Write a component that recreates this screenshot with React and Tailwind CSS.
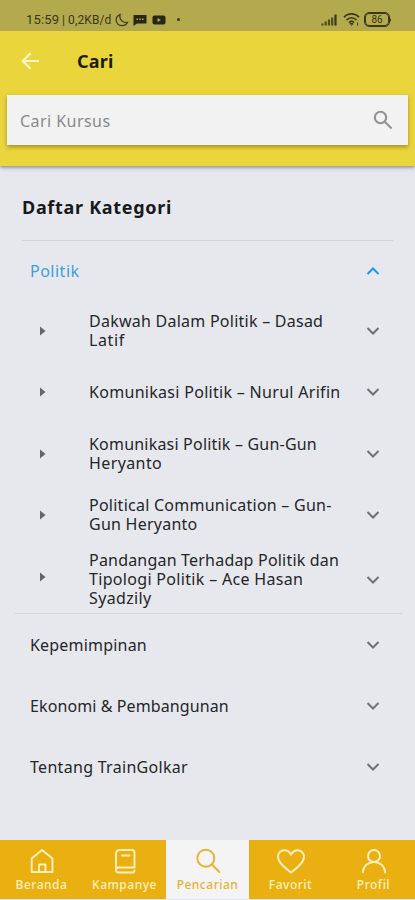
import React, { useState } from 'react';
import clsx from 'clsx';

const lessons = [
    { lines: [['Dakwah Dalam Politik – Dasad', 'tracking-[0.250px]'], ['Latif', 'tracking-[0.600px]']] },
    { lines: [['Komunikasi Politik – Nurul Arifin', 'tracking-[0.300px]']] },
    { lines: [['Komunikasi Politik – Gun-Gun', 'tracking-[0.200px]'], ['Heryanto', 'tracking-[0.400px]']] },
    { lines: [['Political Communication – Gun-', 'tracking-[0.250px]'], ['Gun Heryanto', 'tracking-[0.250px]']] },
    {
        tall: true,
        lines: [
            ['Pandangan Terhadap Politik dan', 'tracking-[0.200px]'],
            ['Tipologi Politik – Ace Hasan', 'tracking-[0.320px]'],
            ['Syadzily', 'tracking-[0.350px]'],
        ],
    },
];

const categories = [
    { name: 'Kepemimpinan', spacing: 'tracking-[0.200px]' },
    { name: 'Ekonomi & Pembangunan', spacing: 'tracking-[0.100px]' },
    { name: 'Tentang TrainGolkar', spacing: 'tracking-[0.300px]' },
];

const tabs = [
    { id: 'home', label: 'Beranda', icon: HomeIcon },
    { id: 'campaign', label: 'Kampanye', icon: BookIcon },
    { id: 'search', label: 'Pencarian', icon: FindIcon },
    { id: 'favorite', label: 'Favorit', icon: HeartIcon },
    { id: 'profile', label: 'Profil', icon: UserIcon },
];

function NavSvg({ children }) {
    return (
        <svg viewBox="0 0 28 26" className="h-[26px] w-7" fill="none" stroke="currentColor" strokeWidth="1.9" strokeLinejoin="round" strokeLinecap="round">
            {children}
        </svg>
    );
}

function HomeIcon() {
    return (
        <NavSvg>
            <path d="M3.700 10.500 14 2l10.500 8.500v13.500H3.700Z" />
            <path d="M11 23.500v-7h6.500v7" />
        </NavSvg>
    );
}

function BookIcon() {
    return (
        <NavSvg>
            <path d="M23.500 19.500H7.500a2.500 2.500 0 0 0-2.500 2.500V5.500A3.500 3.500 0 0 1 8.500 2h12.500a2.500 2.500 0 0 1 2.500 2.500ZM5 22a2.500 2.500 0 0 0 2.500 2.500H21.500q2 0 2-2M11 7.500h7.500" />
        </NavSvg>
    );
}

function FindIcon() {
    return (
        <NavSvg>
            <circle cx="11.800" cy="10.200" r="8.500" />
            <path d="m18 16.500 7.300 7.500" />
        </NavSvg>
    );
}

function HeartIcon() {
    return (
        <NavSvg>
            <path d="M14 24.500C9 20.500 1 15 1 8.800 1 5 3.800 2.300 7.300 2.300c2.900 0 5.300 1.600 6.700 4.400 1.400-2.800 3.800-4.400 6.700-4.400C24.200 2.300 27 5 27 8.800 27 15 19 20.500 14 24.500Z" />
        </NavSvg>
    );
}

function UserIcon() {
    return (
        <NavSvg>
            <circle cx="14" cy="8" r="6" />
            <path d="M2.800 24.300c.5-6.200 4.900-10.200 11.200-10.200s10.700 4 11.200 10.200" />
        </NavSvg>
    );
}

function Chevron({ up = false }) {
    return (
        <svg viewBox="0 0 14 10" className={clsx('h-[10px] w-[14px] shrink-0', up ? 'rotate-180 text-[#2196e8]' : 'text-[#6f7175]')} fill="none" stroke="currentColor" strokeWidth="2">
            <path d="m1.500 2 5.500 5.500L12.500 2" />
        </svg>
    );
}

function StatusBar() {
    return (
        <div className="flex h-[31px] items-center bg-[#b3aa4d] pt-2 pl-[26px] pr-[24px] text-[#3b3718]">
            <span className="w-[36px] whitespace-nowrap font-[Roboto] text-[13px] leading-4 tracking-[0.200px]">15:59</span>
            <span className="w-[51px] whitespace-nowrap font-[Roboto] text-[12px] leading-4 tracking-[0.100px]">| 0,2KB/d</span>
            <svg viewBox="0 0 14 14" className="ml-[2px] h-[14px] w-[14px]" fill="none" stroke="currentColor" strokeWidth="1.200">
                <path d="M5 1.500C2.500 2.500 1.200 4.500 1.200 7c0 3.300 2.600 5.700 5.800 5.700 2.500 0 4.500-1.200 5.500-3.400C8 10.300 3.800 6.500 5 1.500Z" />
            </svg>
            <svg viewBox="0 0 14 12" className="ml-[4px] h-3 w-[14px]">
                <path d="M0.500 1h13v8.500H4L0.500 12Z" fill="#292713" />
                <path d="M3.500 5.200h1.500M6.300 5.200h1.500M9 5.200h1.500" stroke="#b3aa4d" strokeWidth="1.500" />
            </svg>
            <svg viewBox="0 0 14 10" className="ml-[5px] h-[10px] w-[14px]">
                <rect x=".5" y=".5" width="13" height="9" rx="2" fill="#292713" />
                <path d="m5.500 3 3.500 2-3.500 2Z" fill="#b3aa4d" />
            </svg>
            <i className="ml-[11px] size-[3px] rounded-full bg-[#3b3718]" />
            <svg viewBox="0 0 16 12" className="ml-auto h-3 w-4" stroke="currentColor" strokeWidth="2.200">
                <path d="M1.500 11.500v-2M4.700 11.500v-4M8 11.500V5.500M11.200 11.500v-8" opacity=".8" />
                <path d="M14.500 11.500V0.500" />
            </svg>
            <svg viewBox="0 0 17 13" className="ml-[6px] h-[13px] w-[17px]" fill="none" stroke="currentColor" strokeWidth="1.700">
                <path d="M1 4.300C5-.2 12-.2 16 4.300M3.500 7c2.800-3 7.200-3 10 0M6 9.500c1.500-1.500 3.500-1.500 5 0" />
                <path d="m7 10.500 1.500 2 1.500-2ZM14.500 9.500v3" strokeWidth="1" />
            </svg>
            <span className="ml-[5px] flex h-[13px] w-[24px] items-center justify-center rounded-[4px] border border-current pt-px font-[Roboto] text-[10px] leading-[10px] outline-[0.5px] outline-current">86</span>
            <i className="h-1 w-[2px] rounded-r bg-current" />
        </div>
    );
}

export default function App() {
    const [active, setActive] = useState('search');

    return (
        <div className="flex h-[900px] w-full flex-col overflow-hidden bg-[#e7e8ed] font-['Noto_Sans','Open_Sans',sans-serif] text-[#24262a]">
            <header className="h-[166px] shrink-0 bg-[#ead53d] shadow-[0_1px_4px_rgba(40,40,60,0.600)]">
                <StatusBar />
                <div className="flex h-16 items-center pb-[4px] pl-[21px]">
                    <svg viewBox="0 0 19 18" className="h-[18px] w-[19px]" fill="none" stroke="#fbf5cf" strokeWidth="2.200">
                        <path d="M18 9H2M9.500 1.200 1.700 9l7.800 7.800" />
                    </svg>
                    <h1 className="ml-[37px] text-[18px] leading-6 font-bold tracking-[0.200px] text-[#1d1c11]">Cari</h1>
                </div>
                <div className="mx-[7px] flex h-[50px] items-center justify-between bg-[#f2f2f2] pr-[15px] pl-[13px] shadow-[0_2px_4px_rgba(90,80,0,0.500)]">
                    <span className="pt-px text-[16px] leading-6 tracking-[0.450px] text-[#88898b]">Cari Kursus</span>
                    <svg viewBox="0 0 20 20" className="size-5" fill="none" stroke="#929292" strokeWidth="2.100">
                        <circle cx="7.500" cy="7.500" r="5.700" />
                        <path d="m11.800 11.800 6.800 6.800" />
                    </svg>
                </div>
            </header>

            <main className="flex-1">
                <div className="mx-[22px] flex h-[75px] items-center border-b border-[#d1d3d8] pt-[8px]">
                    <h2 className="text-[18px] leading-6 font-bold tracking-[0.700px] text-[#17191c]">Daftar Kategori</h2>
                </div>

                <section className="ml-[15px] mr-[13px] border-b border-[#d3d5da] pr-[22px] pl-[15px]">
                    <div className="flex h-[59.500px] items-center justify-between text-[16px] text-[#3c9edf]">
                        <span className="tracking-[0.500px]">Politik</span>
                        <Chevron up />
                    </div>
                    {lessons.map((lesson, i) => (
                        <div key={i} className={clsx('flex items-center', lesson.tall ? 'h-[67.200px] pt-px' : 'h-[61.300px]')}>
                            <svg viewBox="0 0 6 10" className={clsx('ml-[10px] h-[10px] w-[6px] shrink-0', lesson.tall && 'mb-[6px]')} fill="#63656a">
                                <path d="M0 0.500 5.500 5 0 9.500Z" />
                            </svg>
                            <p className="ml-[43px] flex-1 text-[16px] leading-[19px]">
                                {lesson.lines.map(([text, spacing]) => (
                                    <span key={text} className={clsx('block whitespace-nowrap', spacing)}>{text}</span>
                                ))}
                            </p>
                            <Chevron />
                        </div>
                    ))}
                </section>

                <section className="mx-[15px] pr-[20px] pl-[15px]">
                    {categories.map((category) => (
                        <div key={category.name} className="flex h-[61.300px] items-center justify-between text-[16px]">
                            <span className={category.spacing}>{category.name}</span>
                            <Chevron />
                        </div>
                    ))}
                </section>
            </main>

            <nav className="mb-px grid h-[59px] shrink-0 grid-cols-5">
                {tabs.map(({ id, label, icon: Icon }) => (
                    <button
                        key={id}
                        onClick={() => setActive(id)}
                        className={clsx(
                            'flex flex-col items-center pt-[8px]',
                            active === id ? 'bg-[#f4f4f5] text-[#e6b333]' : 'bg-[#eab012] text-[#fdf0bd]'
                        )}
                    >
                        <Icon />
                        <span className="mt-[3px] text-[12px] leading-4 font-medium tracking-[0.500px]">{label}</span>
                    </button>
                ))}
            </nav>
        </div>
    );
}
